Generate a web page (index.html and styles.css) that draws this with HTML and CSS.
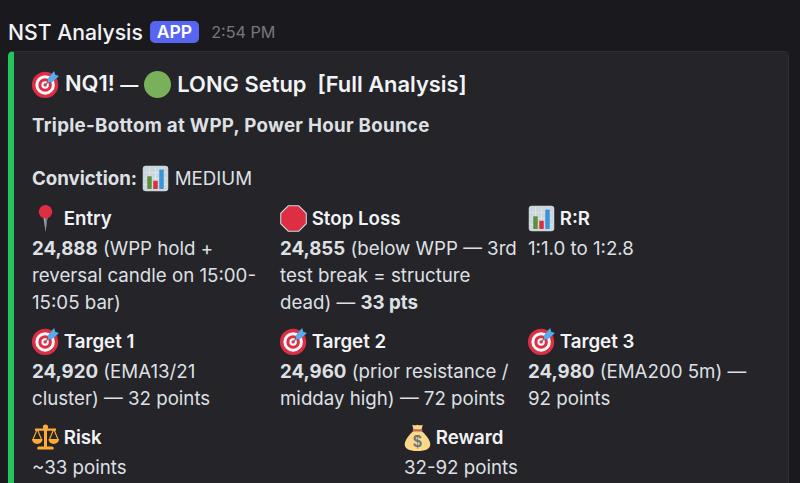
FILE: index.html
```html
<!DOCTYPE html>
<html lang="en">
<head>
<meta charset="utf-8">
<title>NST Analysis</title>
<link rel="stylesheet" href="styles.css">
</head>
<body>
<svg class="defs" width="0" height="0" aria-hidden="true">
  <symbol id="target" viewBox="0 0 36 36">
    <circle cx="17.500" cy="18.500" r="17.500" fill="#dd2e44"/>
    <circle cx="17.500" cy="18.500" r="13" fill="#f5f8fa"/>
    <circle cx="17.500" cy="18.500" r="9" fill="#dd2e44"/>
    <circle cx="17.500" cy="18.500" r="5" fill="#f5f8fa"/>
    <circle cx="17.500" cy="18.500" r="2.200" fill="#dd2e44"/>
    <path d="M17.500 18.500 27 9" stroke="#66757f" stroke-width="1.800"/>
    <path d="M21 10 29.500 0l1.500 5 5 1.500-9.500 8.500-5-.5z" fill="#55acee"/>
  </symbol>
  <symbol id="chart" viewBox="0 0 36 36">
    <rect x="1" y="1" width="34" height="34" rx="4" fill="#ccd6dd"/>
    <path d="M3 10h30M3 18h30M3 26h30M10 3v30M18 3v30M26 3v30" stroke="#e1e8ed" stroke-width="1"/>
    <rect x="7" y="15" width="6" height="17" rx="1" fill="#5c913b"/>
    <rect x="15" y="21" width="6" height="11" rx="1" fill="#dd2e44"/>
    <rect x="23" y="6" width="6" height="26" rx="1" fill="#3b94d9"/>
  </symbol>
  <symbol id="pin" viewBox="0 0 36 36">
    <path d="M15 15h6L18 36z" fill="#99aab5"/>
    <path d="M18 14h3L18 36z" fill="#66757f"/>
    <circle cx="18" cy="9" r="9" fill="#dd2e44"/>
  </symbol>
  <symbol id="stop" viewBox="0 0 36 36">
    <path d="M11 1h14l10 10v14L25 35H11L1 25V11z" fill="#dd2e44" stroke="#ccd6dd" stroke-width="1.500"/>
  </symbol>
  <symbol id="scales" viewBox="0 0 36 36">
    <g fill="#ffac33">
      <rect x="16" y="3" width="4" height="28"/>
      <path d="M10 30h16a2.500 2.500 0 0 1 2.500 4h-21A2.500 2.500 0 0 1 10 30z"/>
      <path d="M4 6h28v3H4z"/>
      <circle cx="18" cy="4" r="3.500"/>
      <path d="M0 20h14c0 4-3 6.500-7 6.500S0 24 0 20zM22 20h14c0 4-3 6.500-7 6.500S22 24 22 20z"/>
    </g>
    <path d="M7 7 1.500 20M7 7l5.500 13M29 7l-5.500 13M29 7l5.500 13" stroke="#ffac33" stroke-width="1.500" fill="none"/>
  </symbol>
  <symbol id="bag" viewBox="0 0 36 36">
    <path d="M13 9C8 13 1 21 1 27c0 6 5 9 17 9s17-3 17-9c0-6-7-14-12-18z" fill="#fdd888"/>
    <path d="M11 1c2 1 5 1 7 0 2 1 5 1 7 0l-2 8H13z" fill="#fdd888"/>
    <rect x="11.500" y="7" width="13" height="3" rx="1" fill="#bf6952"/>
    <text x="18" y="31" text-anchor="middle" font-size="21" font-weight="700" font-family="Liberation Sans, sans-serif" fill="#67757f">$</text>
  </symbol>
</svg>

<header class="head">
  <span class="name">NST Analysis</span>
  <span class="badge">APP</span>
  <time class="time">2:54 PM</time>
</header>

<article class="embed">
  <h1 class="title">
    <svg class="em em-title"><use href="#target"/></svg><span class="t1">NQ1! <span class="dash">—</span></span>
    <span class="dot"></span>
    <span>LONG Setup&nbsp; [Full Analysis]</span>
  </h1>
  <p class="sub"><b>Triple-Bottom at WPP, Power Hour Bounce</b></p>
  <p class="conv"><b>Conviction:</b> <svg class="em"><use href="#chart"/></svg> MEDIUM</p>

  <div class="fields">
    <section class="field">
      <div class="fname"><svg class="em"><use href="#pin"/></svg> Entry</div>
      <div class="fval"><b>24,888</b> (WPP hold +<br>reversal candle on 15:00-<br>15:05 bar)</div>
    </section>
    <section class="field">
      <div class="fname"><svg class="em"><use href="#stop"/></svg> Stop Loss</div>
      <div class="fval"><b>24,855</b> (below WPP — 3rd<br>test break = structure<br>dead) — <b>33 pts</b></div>
    </section>
    <section class="field">
      <div class="fname"><svg class="em"><use href="#chart"/></svg> R:R</div>
      <div class="fval">1:1.0 to 1:2.8</div>
    </section>
    <section class="field">
      <div class="fname"><svg class="em"><use href="#target"/></svg> Target 1</div>
      <div class="fval"><b>24,920</b> (EMA13/21<br>cluster) — 32 points</div>
    </section>
    <section class="field">
      <div class="fname"><svg class="em"><use href="#target"/></svg> Target 2</div>
      <div class="fval"><b>24,960</b> (prior resistance /<br>midday high) — 72 points</div>
    </section>
    <section class="field">
      <div class="fname"><svg class="em"><use href="#target"/></svg> Target 3</div>
      <div class="fval"><b>24,980</b> (EMA200 5m) —<br>92 points</div>
    </section>
    <section class="field half">
      <div class="fname"><svg class="em"><use href="#scales"/></svg> Risk</div>
      <div class="fval">~33 points</div>
    </section>
    <section class="field half">
      <div class="fname"><svg class="em"><use href="#bag"/></svg> Reward</div>
      <div class="fval">32-92 points</div>
    </section>
  </div>
</article>
</body>
</html>
```
FILE: styles.css
```css
html, body {
  margin: 0;
  height: 483px;
  overflow: hidden;
}
body {
  background: #1a1a1e;
  color: #dfe0e3;
  font-family: "Inter", "Noto Sans", sans-serif;
  font-size: 18.7px;
  line-height: 27px;
  padding: 18px 11px 0 8px;
  box-sizing: border-box;
}
.defs { position: absolute; }
.head {
  display: flex;
  align-items: center;
  height: 28px;
  margin-bottom: 5px;
}
.name {
  font-size: 21.2px;
  font-weight: 500;
  color: #f2f3f5;
}
.badge {
  margin-left: 7px;
  background: #5865f2;
  color: #fff;
  font-size: 17.5px;
  font-weight: 600;
  line-height: 22px;
  height: 22px;
  padding: 0 7px;
  border-radius: 5px;
}
.time {
  margin-left: 12px;
  font-size: 16.2px;
  color: #76777e;
}
.embed {
  background: #242429;
  border: 1px solid #2e2e34;
  border-left: 6px solid #23c55e;
  border-radius: 5px;
  padding: 14px 18px 20px 18px;
  height: 460px;
  box-sizing: border-box;
  overflow: hidden;
}
.title {
  margin: 0;
  font-size: 21.9px;
  font-weight: 600;
  line-height: 35px;
  color: #f2f3f5;
  display: flex;
  align-items: center;
  white-space: pre;
}
.dash { font-size: 18px; }
.em {
  width: 27px;
  height: 27px;
  vertical-align: -7px;
}
.em-title { margin-right: 6px; }
.dot {
  width: 27px;
  height: 27px;
  border-radius: 50%;
  background: #78b159;
  margin: 0 6px 0 6px;
}
b { font-weight: 700; }
.sub { margin: 10px 0 0; letter-spacing: .3px; }
.conv { margin: 26px 0 0; }
.fields {
  display: grid;
  grid-template-columns: repeat(6, 124px);
  row-gap: 10px;
  margin-top: 11px;
}
.field { grid-column: span 2; white-space: nowrap; }
.field.half { grid-column: span 3; }
.fname { font-weight: 600; color: #f2f3f5; line-height: 31px; margin-bottom: 1px; }
```
